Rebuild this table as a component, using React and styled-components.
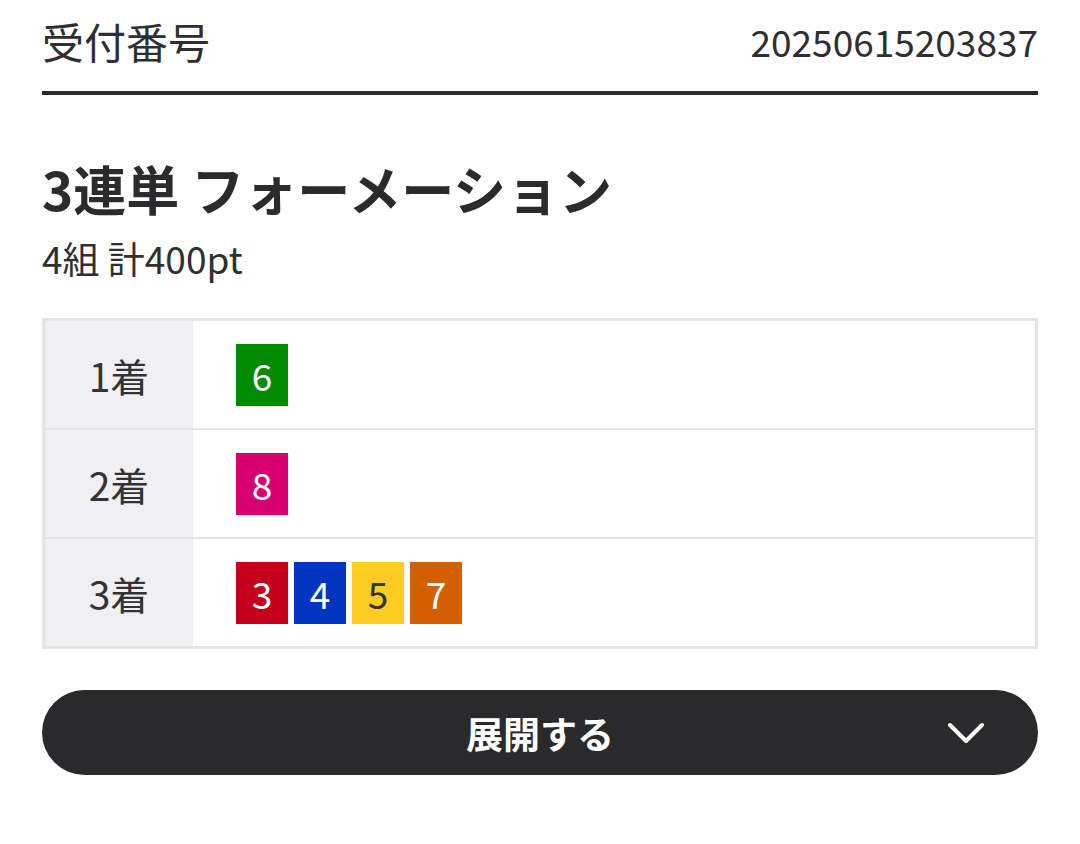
import React from 'react';
import styled, { createGlobalStyle } from 'styled-components';

const GlobalStyle = createGlobalStyle`
  body {
    margin: 0;
    background: #ffffff;
    font-family: 'Noto Sans CJK JP', 'Noto Sans', sans-serif;
    color: #2f2f31;
  }
`;

const Page = styled.div`
  padding: 0 42px;
`;

const Header = styled.div`
  display: flex;
  justify-content: space-between;
  align-items: center;
  height: 95px;
  box-sizing: border-box;
  padding-bottom: 9px;
  border-bottom: 4px solid #2b2b2d;
`;

const HeaderLabel = styled.div`
  font-size: 42px;
  line-height: 1;
`;

const HeaderValue = styled.div`
  font-size: 37px;
  line-height: 1;
`;

const Title = styled.h1`
  margin: 67px 0 0;
  font-size: 53px;
  font-weight: 700;
  line-height: 1;
  color: #2b2b2d;
`;

const Summary = styled.div`
  margin-top: 25px;
  font-size: 37px;
  line-height: 1;
`;

const Table = styled.div`
  margin-top: 41px;
  border: 3px solid #e4e4ea;
  display: flex;
  flex-direction: column;
`;

const Row = styled.div`
  display: flex;
  height: 107px;
  & + & {
    border-top: 2px solid #e4e4ea;
  }
`;

const Label = styled.div`
  width: 148px;
  background: #efeff4;
  display: flex;
  align-items: center;
  justify-content: center;
  font-size: 39px;
  color: #333335;
`;

const Cell = styled.div`
  flex: 1;
  display: flex;
  align-items: center;
  gap: 6px;
  padding-left: 43px;
`;

const Badge = styled.div`
  width: 52px;
  height: 62px;
  display: flex;
  align-items: center;
  justify-content: center;
  font-size: 37px;
  background: ${({ bg }) => bg};
  color: ${({ fg }) => fg || '#ffffff'};
`;

const ExpandButton = styled.button`
  margin-top: 41px;
  width: 100%;
  height: 85px;
  border: none;
  border-radius: 43px;
  background: #2a2a2d;
  color: #ffffff;
  font-family: inherit;
  font-size: 37px;
  font-weight: 700;
  display: flex;
  align-items: center;
  justify-content: center;
  position: relative;
`;

const Chevron = styled.svg`
  position: absolute;
  right: 52px;
  top: 50%;
  transform: translateY(-50%);
`;

const colors = {
  3: { bg: '#c5001c' },
  4: { bg: '#0036bf' },
  5: { bg: '#fdcb22', fg: '#333333' },
  6: { bg: '#008a00' },
  7: { bg: '#d35f00' },
  8: { bg: '#d8006f' },
};

const rows = [
  { label: '1着', nums: [6] },
  { label: '2着', nums: [8] },
  { label: '3着', nums: [3, 4, 5, 7] },
];

export default function App() {
  return (
    <Page>
      <GlobalStyle />
      <Header>
        <HeaderLabel>受付番号</HeaderLabel>
        <HeaderValue>20250615203837</HeaderValue>
      </Header>
      <Title>3連単 フォーメーション</Title>
      <Summary>4組 計400pt</Summary>
      <Table>
        {rows.map((r) => (
          <Row key={r.label}>
            <Label>{r.label}</Label>
            <Cell>
              {r.nums.map((n) => (
                <Badge key={n} bg={colors[n].bg} fg={colors[n].fg}>
                  {n}
                </Badge>
              ))}
            </Cell>
          </Row>
        ))}
      </Table>
      <ExpandButton>
        展開する
        <Chevron width="40" height="24" viewBox="0 0 40 24">
          <path d="M4 4 L20 20 L36 4" fill="none" stroke="#ffffff" strokeWidth="4" strokeLinecap="round" strokeLinejoin="round" />
        </Chevron>
      </ExpandButton>
    </Page>
  );
}
